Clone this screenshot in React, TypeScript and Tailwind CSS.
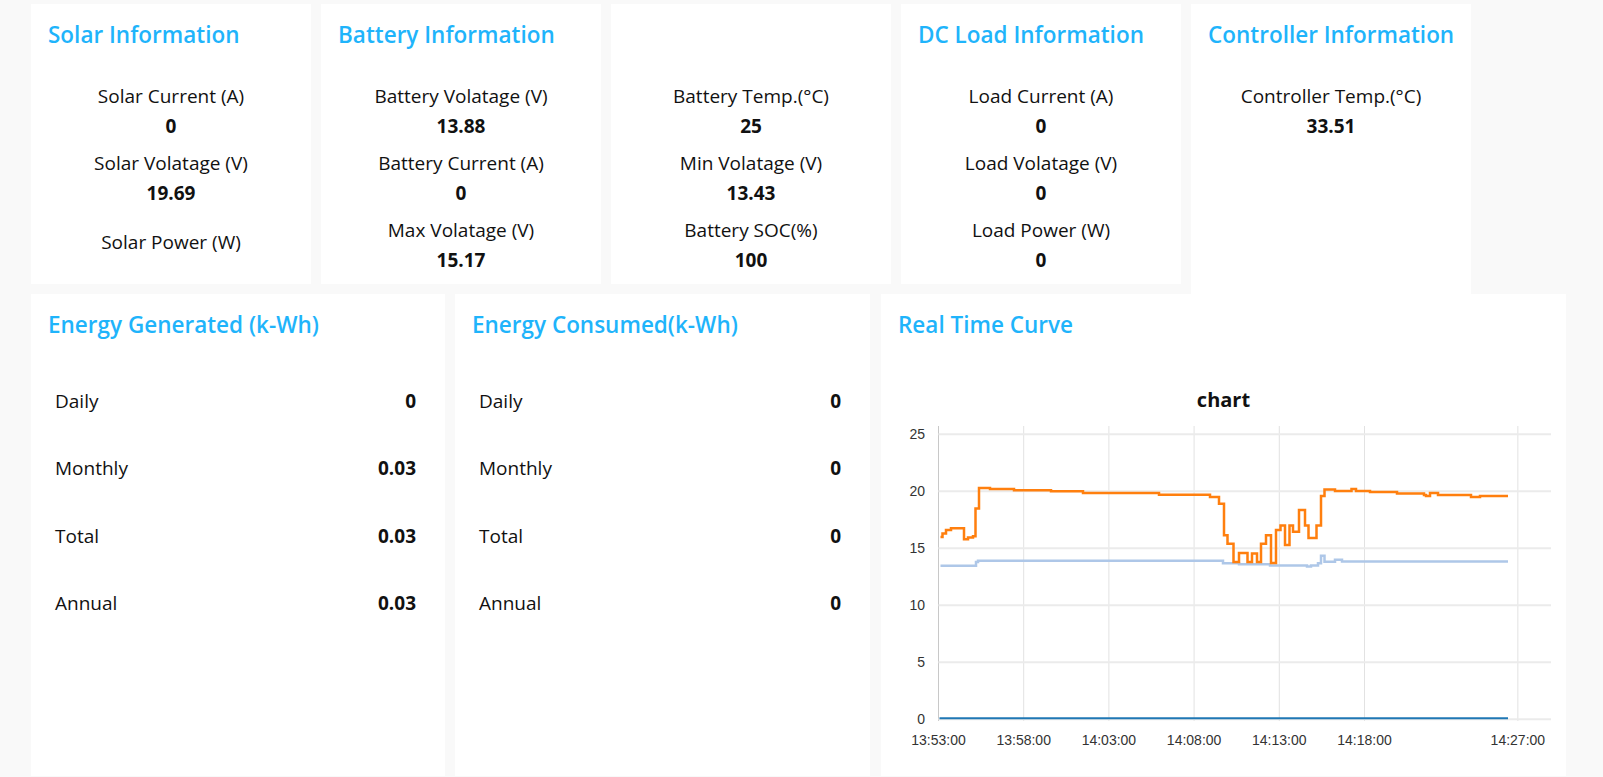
import React from 'react';

type Item = { label: string; value: string };

const TITLE = 'pl-[17px] pt-[15px] h-[47px] text-[22.5px] font-semibold leading-[32px] text-[#1fb4fb]';

const infoCards: { title: string; items: Item[]; tall?: boolean }[] = [
  {
    title: 'Solar Information',
    items: [
      { label: 'Solar Current (A)', value: '0' },
      { label: 'Solar Volatage (V)', value: '19.69' },
      { label: 'Solar Power (W)', value: '' },
    ],
  },
  {
    title: 'Battery Information',
    items: [
      { label: 'Battery Volatage (V)', value: '13.88' },
      { label: 'Battery Current (A)', value: '0' },
      { label: 'Max Volatage (V)', value: '15.17' },
    ],
  },
  {
    title: '',
    items: [
      { label: 'Battery Temp.(°C)', value: '25' },
      { label: 'Min Volatage (V)', value: '13.43' },
      { label: 'Battery SOC(%)', value: '100' },
    ],
  },
  {
    title: 'DC Load Information',
    items: [
      { label: 'Load Current (A)', value: '0' },
      { label: 'Load Volatage (V)', value: '0' },
      { label: 'Load Power (W)', value: '0' },
    ],
  },
  {
    title: 'Controller Information',
    items: [{ label: 'Controller Temp.(°C)', value: '33.51' }],
    tall: true,
  },
];

const energyCards: { title: string; rows: Item[]; width: string }[] = [
  {
    title: 'Energy Generated (k-Wh)',
    width: 'w-[414px]',
    rows: [
      { label: 'Daily', value: '0' },
      { label: 'Monthly', value: '0.03' },
      { label: 'Total', value: '0.03' },
      { label: 'Annual', value: '0.03' },
    ],
  },
  {
    title: 'Energy Consumed(k-Wh)',
    width: 'w-[415px]',
    rows: [
      { label: 'Daily', value: '0' },
      { label: 'Monthly', value: '0' },
      { label: 'Total', value: '0' },
      { label: 'Annual', value: '0' },
    ],
  },
];

// chart geometry (svg sits at page x=881, y=415)
const LEFT = 881;
const X0 = 57.5;
const PER_MIN = 17.04;
const yOf = (v: number) => 304.3 - v * 11.4;

// [page x, value] samples, drawn as steps
const solar: [number, number][] = [
  [940.5, 16.0], [942.5, 16.3], [946, 16.6], [951, 16.75], [964, 15.8], [968, 15.95],
  [973, 16.05], [975.5, 18.5], [979, 20.3], [990, 20.2], [1014, 20.1], [1051, 20.0],
  [1083, 19.85], [1159, 19.7], [1210, 19.5], [1219, 18.9], [1224, 16.15], [1227.5, 15.4],
  [1233.5, 13.8], [1239, 14.6], [1247.5, 13.8], [1252, 14.55], [1257, 13.8], [1261, 15.4],
  [1266, 16.15], [1271, 13.7], [1276, 16.6], [1280.5, 17.0], [1285, 15.3], [1289.5, 17.0],
  [1293, 16.45], [1299, 18.35], [1305, 17.0], [1308.5, 15.9], [1316.5, 17.0], [1321, 19.6],
  [1324.5, 20.17], [1335, 20.03], [1351.5, 20.2], [1356, 20.03], [1370, 19.94], [1397, 19.8],
  [1424, 19.68], [1426, 19.6], [1430, 19.85], [1438, 19.68], [1471, 19.5], [1480, 19.6],
  [1508, 19.6],
];

const battery: [number, number][] = [
  [940.5, 13.47], [976, 13.8], [978, 13.9], [1223, 13.68], [1239, 13.6], [1270, 13.5],
  [1307, 13.4], [1311, 13.5], [1318, 13.68], [1321, 14.35], [1324.5, 13.82], [1335, 14.0],
  [1342, 13.85], [1508, 13.85],
];

function stepPath(points: [number, number][]) {
  let d = '';
  points.forEach(([px, v], i) => {
    const x = (px - LEFT).toFixed(1);
    const y = yOf(v).toFixed(1);
    d += i === 0 ? `M${x} ${y}` : ` H${x} V${y}`;
  });
  return d;
}

function InfoCard({ title, items, tall }: { title: string; items: Item[]; tall?: boolean }) {
  return (
    <div className={`w-[280px] bg-white ${tall ? 'h-[290px]' : 'h-[280px]'}`}>
      <div className={TITLE}>{title}</div>
      <div className="mt-[30px] flex flex-col items-center gap-[7px] text-[19px] text-[#111]">
        {items.map((item) => (
          <div key={item.label} className="flex flex-col items-center">
            <div className={`leading-[30px] ${item.value === '' ? 'mt-[12px]' : ''}`}>{item.label}</div>
            {item.value !== '' && <div className="font-bold leading-[30px]">{item.value}</div>}
          </div>
        ))}
      </div>
    </div>
  );
}

function EnergyCard({ title, rows, width }: { title: string; rows: Item[]; width: string }) {
  return (
    <div className={`${width} h-[482px] bg-white`}>
      <div className={TITLE}>{title}</div>
      <div className="mt-[26px] pl-[24px] pr-[29px] text-[19px] text-[#111]">
        {rows.map((row) => (
          <div key={row.label} className="flex h-[67.5px] items-center justify-between">
            <span>{row.label}</span>
            <span className="font-bold">{row.value}</span>
          </div>
        ))}
      </div>
    </div>
  );
}

function Chart() {
  const yTicks = [0, 5, 10, 15, 20, 25];
  const xTicks = [
    { m: 0, t: '13:53:00' },
    { m: 5, t: '13:58:00' },
    { m: 10, t: '14:03:00' },
    { m: 15, t: '14:08:00' },
    { m: 20, t: '14:13:00' },
    { m: 25, t: '14:18:00' },
    { m: 34, t: '14:27:00' },
  ];
  return (
    <svg width="685" height="340" className="block">
      {xTicks.map((tk) => {
        const x = X0 + tk.m * PER_MIN;
        return (
          <line key={tk.t} x1={x} x2={x} y1={11} y2={306} stroke={tk.m === 0 ? '#c8c8c8' : '#e2e2e2'} strokeWidth="1" />
        );
      })}
      {yTicks.map((v) => (
        <line key={v} x1={X0} x2={670} y1={yOf(v)} y2={yOf(v)} stroke="#ebebeb" strokeWidth="2" />
      ))}
      {yTicks.map((v) => (
        <text key={v} x={44} y={yOf(v) + 5} textAnchor="end" fontSize="14" fill="#333" fontFamily="'Liberation Sans', Arial, sans-serif">
          {v}
        </text>
      ))}
      {xTicks.map((tk) => (
        <text key={tk.t} x={X0 + tk.m * PER_MIN} y={329.5} textAnchor="middle" fontSize="14" fill="#333" fontFamily="'Liberation Sans', Arial, sans-serif">
          {tk.t}
        </text>
      ))}
      <path d={stepPath(battery)} fill="none" stroke="#aec7e8" strokeWidth="2.5" />
      <path d={stepPath(solar)} fill="none" stroke="#ff7f0e" strokeWidth="2.5" />
      <path d={`M${X0 + 1} ${yOf(0) - 1} H627`} fill="none" stroke="#1f77b4" strokeWidth="2" />
    </svg>
  );
}

export default function App() {
  return (
    <div className="min-h-screen bg-[#f9f9f9] pt-[4px] pl-[31px]" style={{ fontFamily: "'Open Sans', 'Noto Sans', sans-serif" }}>
      <div className="flex items-start gap-[10px] h-[290px]">
        {infoCards.map((card, i) => (
          <InfoCard key={i} title={card.title} items={card.items} tall={card.tall} />
        ))}
      </div>
      <div className="flex">
        <div className="flex gap-[10px]">
          {energyCards.map((card) => (
            <EnergyCard key={card.title} title={card.title} rows={card.rows} width={card.width} />
          ))}
        </div>
        <div className="ml-[11px] w-[685px] h-[482px] bg-white">
          <div className={TITLE}>Real Time Curve</div>
          <div className="mt-[44px] text-center text-[20px] font-bold leading-[30px] text-[#111]">chart</div>
          <Chart />
        </div>
      </div>
    </div>
  );
}
